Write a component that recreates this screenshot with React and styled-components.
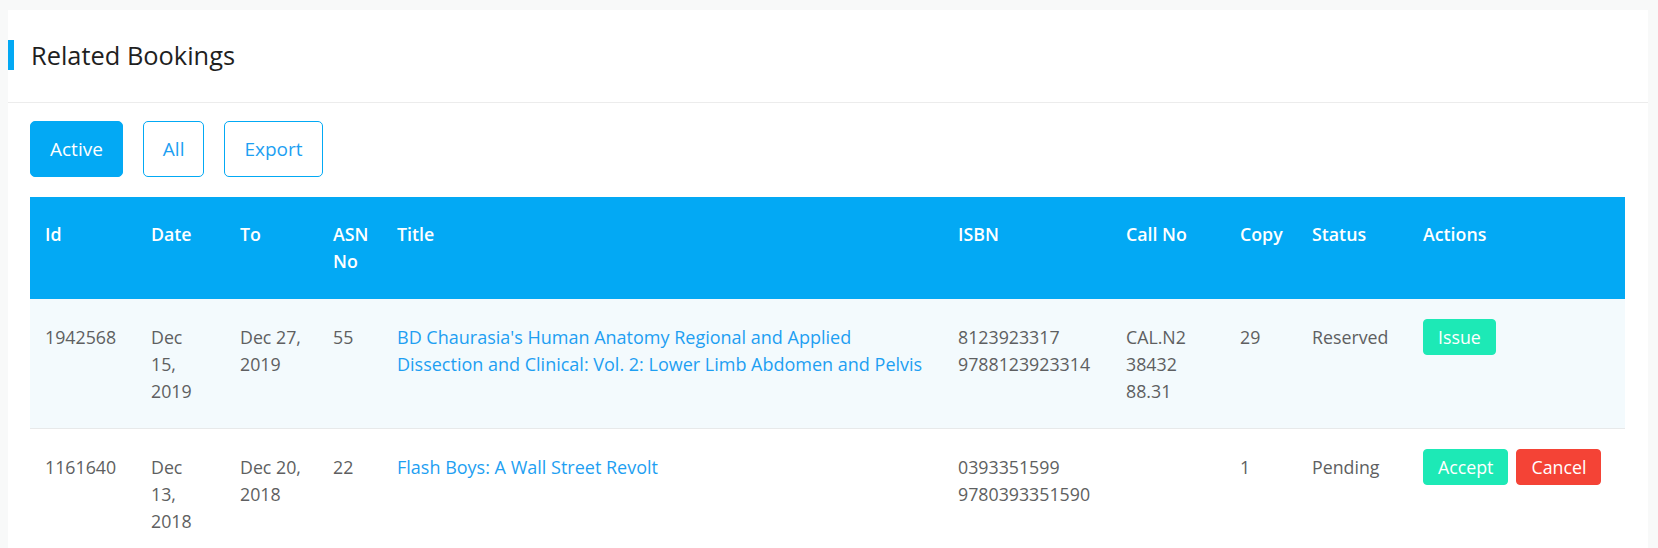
import React from "react"
import styled, { createGlobalStyle } from "styled-components"

const GlobalStyle = createGlobalStyle`
  body {
    margin: 0;
    padding: 10px 10px 0 8px;
    background: #f8f9f9;
    font-family: "Open Sans", "Liberation Sans", sans-serif;
    font-size: 17.78px;
    line-height: 1.5;
    color: #5e5f61;
  }
`

const Card = styled.div`
  background: #fff;
  min-height: 560px;
`

const CardHeader = styled.div`
  display: flex;
  align-items: center;
  height: 93px;
  box-sizing: border-box;
  border-bottom: 1px solid #ececec;
  padding-bottom: 2px;
`

const Title = styled.h4`
  margin: 0;
  height: 30px;
  display: flex;
  align-items: center;
  border-left: 6px solid #03a9f4;
  padding-left: 17px;
  font-size: 25.4px;
  font-weight: 400;
  color: #1f1f1f;
`

const CardBody = styled.div`
  padding: 18px 23px 0 22px;
`

const Toolbar = styled.div`
  display: flex;
  gap: 20px;
  margin-bottom: 20px;
`

const FilterButton = styled.button`
  font-family: inherit;
  font-size: 19px;
  line-height: 28px;
  height: 56px;
  padding: 0 19px;
  border-radius: 5px;
  border: 1px solid #03a9f4;
  background: ${(p) => (p.$active ? "#03a9f4" : "#fff")};
  color: ${(p) => (p.$active ? "#fff" : "#1e9ff2")};
  cursor: pointer;
`

const Table = styled.table`
  width: 1595px;
  border-collapse: collapse;
  table-layout: fixed;
`

const Th = styled.th`
  background: #03a9f4;
  color: #fff;
  font-weight: 600;
  text-align: left;
  vertical-align: top;
  padding: 24px 15px 25px;
`

const Row = styled.tr`
  background: ${(p) => (p.$striped ? "#f3fafd" : "#fff")};
  border-bottom: 1px solid #e7e9ea;
`

const Td = styled.td`
  vertical-align: top;
  padding: 25px 15px 24px;
`

const ActionCell = styled(Td)`
  padding-top: 20px;
`

const Actions = styled.div`
  display: flex;
  gap: 8px;
`

const TitleLink = styled.a`
  color: #1e9ff2;
  text-decoration: none;
  font-size: 18px;
`

const SmallButton = styled.button`
  font-family: inherit;
  font-size: 17.78px;
  line-height: 26px;
  padding: 4px 14px;
  border-radius: 4px;
  border: 1px solid ${(p) => p.$color};
  background: ${(p) => p.$color};
  color: #fff;
  cursor: pointer;
`

const columns = [
  { label: "Id", width: 106 },
  { label: "Date", width: 89 },
  { label: "To", width: 93 },
  { label: "ASN No", width: 64 },
  { label: "Title", width: 561 },
  { label: "ISBN", width: 168 },
  { label: "Call No", width: 114 },
  { label: "Copy", width: 72 },
  { label: "Status", width: 111 },
  { label: "Actions", width: 217 },
]

const bookings = [
  {
    id: 1942568,
    date: "Dec 15, 2019",
    to: "Dec 27, 2019",
    asn: 55,
    title:
      "BD Chaurasia's Human Anatomy Regional and Applied Dissection and Clinical: Vol. 2: Lower Limb Abdomen and Pelvis",
    isbn: ["8123923317", "9788123923314"],
    callNo: "CAL.N2 38432 88.31",
    copy: 29,
    status: "Reserved",
    actions: [{ text: "Issue", color: "#1de9b6" }],
  },
  {
    id: 1161640,
    date: "Dec 13, 2018",
    to: "Dec 20, 2018",
    asn: 22,
    title: "Flash Boys: A Wall Street Revolt",
    isbn: ["0393351599", "9780393351590"],
    callNo: "",
    copy: 1,
    status: "Pending",
    actions: [
      { text: "Accept", color: "#1de9b6" },
      { text: "Cancel", color: "#f44336" },
    ],
  },
]

function App() {
  return (
    <>
      <GlobalStyle />
      <Card>
        <CardHeader>
          <Title>Related Bookings</Title>
        </CardHeader>
        <CardBody>
          <Toolbar>
            <FilterButton $active>Active</FilterButton>
            <FilterButton>All</FilterButton>
            <FilterButton>Export</FilterButton>
          </Toolbar>
          <Table>
            <colgroup>
              {columns.map((c) => (
                <col key={c.label} style={{ width: c.width }} />
              ))}
            </colgroup>
            <thead>
              <tr>
                {columns.map((c) => (
                  <Th key={c.label}>{c.label}</Th>
                ))}
              </tr>
            </thead>
            <tbody>
              {bookings.map((b, i) => (
                <Row key={b.id} $striped={i % 2 === 0}>
                  <Td>{b.id}</Td>
                  <Td>{b.date}</Td>
                  <Td>{b.to}</Td>
                  <Td>{b.asn}</Td>
                  <Td>
                    <TitleLink href="#">{b.title}</TitleLink>
                  </Td>
                  <Td>
                    {b.isbn[0]}
                    <br />
                    {b.isbn[1]}
                  </Td>
                  <Td>{b.callNo}</Td>
                  <Td>{b.copy}</Td>
                  <Td>{b.status}</Td>
                  <ActionCell>
                    <Actions>
                      {b.actions.map((a) => (
                        <SmallButton key={a.text} $color={a.color}>
                          {a.text}
                        </SmallButton>
                      ))}
                    </Actions>
                  </ActionCell>
                </Row>
              ))}
            </tbody>
          </Table>
        </CardBody>
      </Card>
    </>
  )
}

export default App
